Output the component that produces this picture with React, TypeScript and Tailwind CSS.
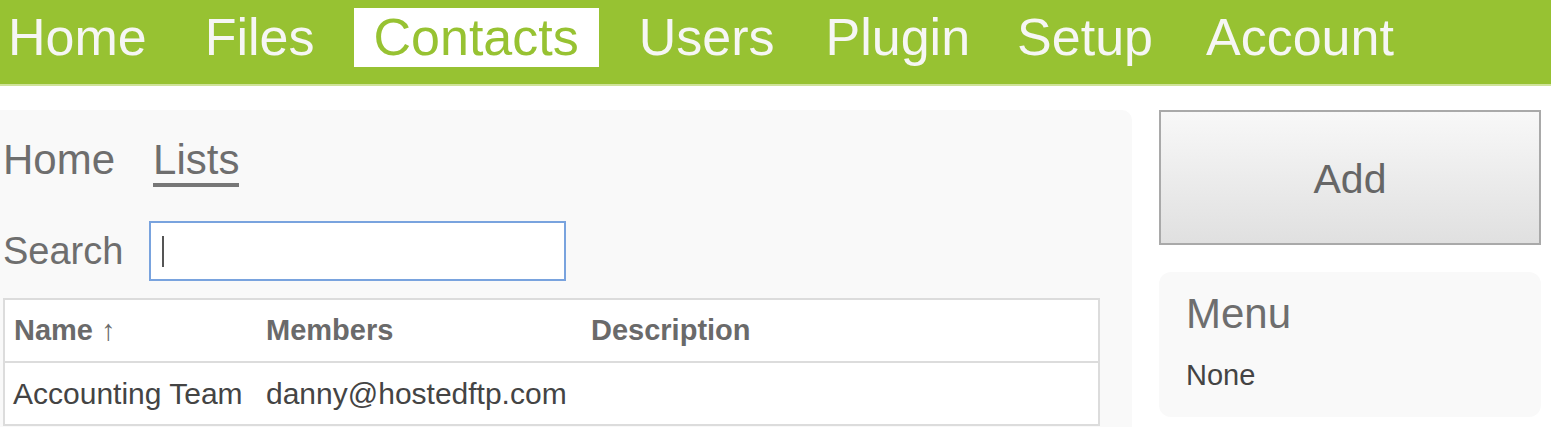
const navItems = ['Home', 'Files', 'Contacts', 'Users', 'Plugin', 'Setup', 'Account'];

// left margin of each nav item, measured from the previous item's box
const navGap: Record<string, string> = {
    Home: 'ml-[-12px]',
    Files: 'ml-[18px]',
    Contacts: 'ml-[19px]',
    Users: 'ml-[20px]',
    Plugin: 'ml-[11px]',
    Setup: 'ml-[7px]',
    Account: 'ml-[13px]',
};

export default function App() {
    return (
        <div className="w-[1551px] h-[427px] overflow-hidden bg-white font-['Liberation_Sans',Arial,sans-serif]">
            <nav className="h-[86px] bg-[#97c232] border-b-2 border-[#cfe39a] flex items-start pt-[8px]">
                {navItems.map((item) => (
                    <a
                        key={item}
                        className={`${navGap[item]} px-[20px] h-[59px] leading-[59px] text-[52px] ${
                            item === 'Contacts' ? 'bg-white text-[#97c232]' : 'text-[#f6f6f4]'
                        }`}
                    >
                        {item}
                    </a>
                ))}
            </nav>

            <div className="flex pt-[24px]">
                <main className="w-[1132px] h-[317px] bg-[#f9f9f9] rounded-tr-[10px] pl-[3px] pt-[27px]">
                    <div className="flex items-start text-[42px] text-[#6e6e6e] leading-[46px]">
                        <a>Home</a>
                        <a className="ml-[38px] border-b-4 border-[#777777]">Lists</a>
                    </div>

                    <div className="flex items-center mt-[34px]">
                        <label className="text-[38px] text-[#6e6e6e] leading-[44px]">Search</label>
                        <div className="ml-[26px] w-[417px] h-[60px] bg-white border-2 border-[#79a3de] flex items-center pl-[11px]">
                            <div className="w-[2px] h-[31px] bg-[#555555]" />
                        </div>
                    </div>

                    <table className="mt-[17px] w-[1097px] bg-white border-collapse border-2 border-[#dcdcdc] text-left">
                        <thead className="text-[29px] text-[#6a6a6a]">
                            <tr className="h-[63px] border-b-2 border-[#dcdcdc]">
                                <th className="w-[253px] pl-[9px] font-bold">
                                    Name <span className="font-normal">↑</span>
                                </th>
                                <th className="w-[325px] pl-[9px] font-bold">Members</th>
                                <th className="pl-[9px] font-bold">Description</th>
                            </tr>
                        </thead>
                        <tbody className="text-[30px] text-[#444444]">
                            <tr className="h-[63px] border-b-2 border-[#dcdcdc]">
                                <td className="pl-[8px] whitespace-nowrap">Accounting Team</td>
                                <td className="pl-[9px]">danny@hostedftp.com</td>
                                <td className="pl-[9px]"></td>
                            </tr>
                        </tbody>
                    </table>
                </main>

                <aside className="ml-[27px] w-[382px]">
                    <button className="w-full h-[135px] border-2 border-[#a9a9a9] bg-gradient-to-b from-[#f8f8f8] to-[#e0e0e0] text-[41px] text-[#666666] pt-[4px]">
                        Add
                    </button>
                    <div className="mt-[27px] h-[145px] bg-[#f9f9f9] rounded-[12px] pl-[27px] pt-[18px]">
                        <h3 className="text-[42px] leading-[48px] text-[#6e6e6e]">Menu</h3>
                        <p className="mt-[21px] text-[29px] leading-[33px] text-[#444444]">None</p>
                    </div>
                </aside>
            </div>
        </div>
    );
}
